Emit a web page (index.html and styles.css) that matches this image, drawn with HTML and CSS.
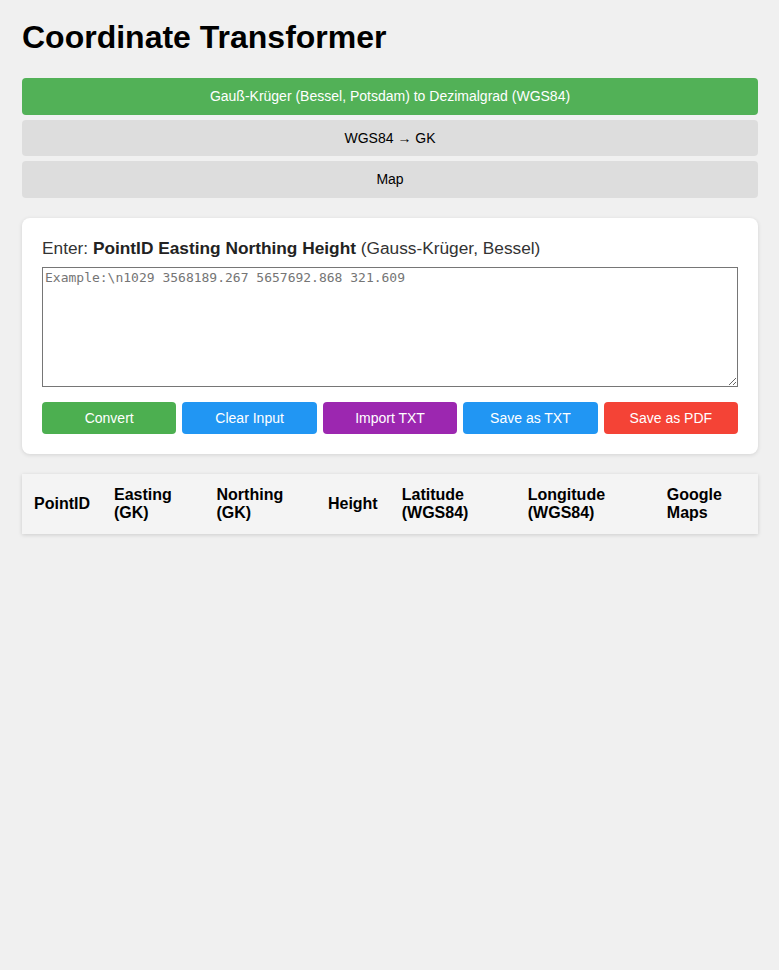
FILE: index.html
```html
<!DOCTYPE html>
<html lang="en">
<head>
<meta charset="utf-8">
<title>Coordinate Transformer</title>
<link rel="stylesheet" href="styles.css">
</head>
<body>
<h1 class="title">Coordinate Transformer</h1>
<nav class="tabs">
  <button class="tab tab-active">Gauß-Krüger (Bessel, Potsdam) to Dezimalgrad (WGS84)</button>
  <button class="tab">WGS84 → GK</button>
  <button class="tab">Map</button>
</nav>
<section class="card">
  <label class="label" for="input">Enter: <b>PointID Easting Northing Height</b> (Gauss-Krüger, Bessel)</label>
  <textarea id="input" class="input" placeholder="Example:\n1029 3568189.267 5657692.868 321.609"></textarea>
  <div class="actions">
    <button class="btn btn-green">Convert</button>
    <button class="btn btn-blue">Clear Input</button>
    <button class="btn btn-purple">Import TXT</button>
    <button class="btn btn-blue">Save as TXT</button>
    <button class="btn btn-red">Save as PDF</button>
  </div>
</section>
<table class="results">
  <thead>
    <tr>
      <th>PointID</th>
      <th>Easting (GK)</th>
      <th>Northing (GK)</th>
      <th>Height</th>
      <th>Latitude (WGS84)</th>
      <th>Longitude (WGS84)</th>
      <th>Google Maps</th>
    </tr>
  </thead>
  <tbody></tbody>
</table>
</body>
</html>
```
FILE: styles.css
```css
html, body { margin: 0; }
body {
  background: #f0f0f0;
  font-family: "Liberation Sans", Arial, sans-serif;
  padding: 0 21px 20px 22px;
  color: #000;
}
.title {
  font-size: 32px;
  font-weight: bold;
  margin: 0;
  padding: 19px 0 22px;
  line-height: 37px;
}
.tabs {
  display: flex;
  flex-direction: column;
  gap: 5px;
}
.tab {
  display: block;
  width: 100%;
  height: 36.6px;
  border: none;
  border-radius: 4px;
  background: #dddddd;
  color: #000;
  font-family: "Liberation Sans", Arial, sans-serif;
  font-size: 14px;
  padding: 0;
}
.tab-active {
  background: #52b157;
  color: #fff;
}
.card {
  background: #fff;
  border-radius: 8px;
  box-shadow: 0 1px 4px rgba(0,0,0,0.12);
  padding: 20px 20px 20px;
  margin-top: 20px;
}
.label {
  display: block;
  font-size: 17.3px;
  color: #333;
  line-height: 21px;
  margin-bottom: 8px;
}
.label b { color: #222; }
.input {
  display: block;
  box-sizing: border-box;
  width: 100%;
  height: 120px;
  border: 1px solid #767676;
  border-radius: 0;
  font-family: "DejaVu Sans Mono", "Liberation Mono", monospace;
  font-size: 13px;
  padding: 2px;
  margin: 0 0 15px;
  resize: vertical;
}
.input::placeholder { color: #757575; }
.actions {
  display: flex;
  gap: 6px;
}
.btn {
  flex: 1;
  height: 32px;
  border: none;
  border-radius: 4px;
  color: #fff;
  font-family: "Liberation Sans", Arial, sans-serif;
  font-size: 14px;
  padding: 0;
}
.btn-green { background: #4caf50; }
.btn-blue { background: #2196f3; }
.btn-purple { background: #9c27b0; }
.btn-red { background: #f44336; }
.results {
  width: 100%;
  margin-top: 20px;
  border-collapse: collapse;
  background: #fff;
  box-shadow: 0 1px 4px rgba(0,0,0,0.15);
}
.results th {
  background: #f4f4f4;
  font-size: 16px;
  font-weight: bold;
  text-align: left;
  padding: 12px;
  line-height: 18px;
}
```
